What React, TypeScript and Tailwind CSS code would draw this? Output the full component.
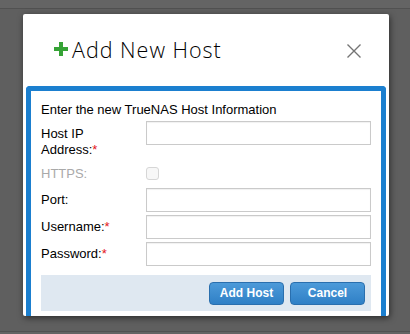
const labelCls = "w-[105px] shrink-0 leading-[16px]";
const inputCls =
  "w-[225px] h-[24px] border border-[#cacaca] bg-white shadow-[inset_0_1px_1px_rgba(0,0,0,0.06)] outline-none";

const Req = () => <span className="text-[#e4161b]">*</span>;

const Button = ({ children }: { children: React.ReactNode }) => (
  <button className="w-[75px] h-[23px] rounded-[4px] border border-[#2a6fae] bg-gradient-to-b from-[#4c9ad9] to-[#2f80c6] text-white text-[12px] font-bold leading-none">
    {children}
  </button>
);

export default function App() {
  return (
    <div className="w-[410px] h-[334px] bg-[#646464] pt-[8px] overflow-hidden">
      <div className="h-[324px] bg-[#5f5f5f] border-y border-[#515151] pt-[5px]">
        <div className="ml-[23px] w-[366px] h-[302px] bg-white rounded-[2px] shadow-[1px_2px_6px_rgba(0,0,0,0.55)] overflow-hidden">
          {/* header */}
          <div className="h-[72px] flex items-center pl-[31px] pr-[28px]">
            <svg width="14" height="14" viewBox="0 0 14 14" className="mt-[-3px] shrink-0">
              <path d="M5 0h4v5h5v4H9v5H5V9H0V5h5z" fill="#36a336" />
            </svg>
            <h1
              className="ml-[4px] text-[21.5px] font-light tracking-[1px] text-black leading-[24px]"
              style={{ fontFamily: '"Open Sans", sans-serif' }}
            >
              Add New Host
            </h1>
            <svg width="14" height="14" viewBox="0 0 14 14" className="ml-auto mt-[1px]">
              <path d="M0.5 0.5L13.5 13.5M13.5 0.5L0.5 13.5" stroke="#747474" strokeWidth="1.4" />
            </svg>
          </div>

          {/* form */}
          <div
            className="mx-[3px] border-[5px] border-b-0 border-[#1b7fcf] rounded-t-[4px] h-[240px] px-[10px] pt-[11px] text-[13px] text-black"
            style={{ fontFamily: '"Liberation Sans", Arial, sans-serif' }}
          >
            <p className="leading-[16px]">Enter the new TrueNAS Host Information</p>

            <div className="mt-[3px] flex items-start">
              <label className={`${labelCls} pt-[5px] pr-[30px]`}>
                Host IP Address:<Req />
              </label>
              <input className={inputCls} />
            </div>

            <div className="mt-[8px] flex items-center">
              <label className={`${labelCls} text-[#a9a9a9]`}>HTTPS:</label>
              <span className="w-[13px] h-[13px] mt-[-1px] rounded-[3px] border border-[#d6d6d6] bg-[#f7f7f7]" />
            </div>

            <div className="mt-[6px] flex items-center">
              <label className={labelCls}>Port:</label>
              <input className={inputCls} />
            </div>

            <div className="mt-[3px] flex items-center">
              <label className={labelCls}>
                Username:<Req />
              </label>
              <input className={inputCls} />
            </div>

            <div className="mt-[3px] flex items-center">
              <label className={labelCls}>
                Password:<Req />
              </label>
              <input type="password" className={inputCls} />
            </div>

            <div className="mt-[9px] h-[36px] bg-[#dfe8f1] flex items-center justify-end gap-[6px] pr-[6px]">
              <Button>Add Host</Button>
              <Button>Cancel</Button>
            </div>
          </div>
        </div>
      </div>
    </div>
  );
}
